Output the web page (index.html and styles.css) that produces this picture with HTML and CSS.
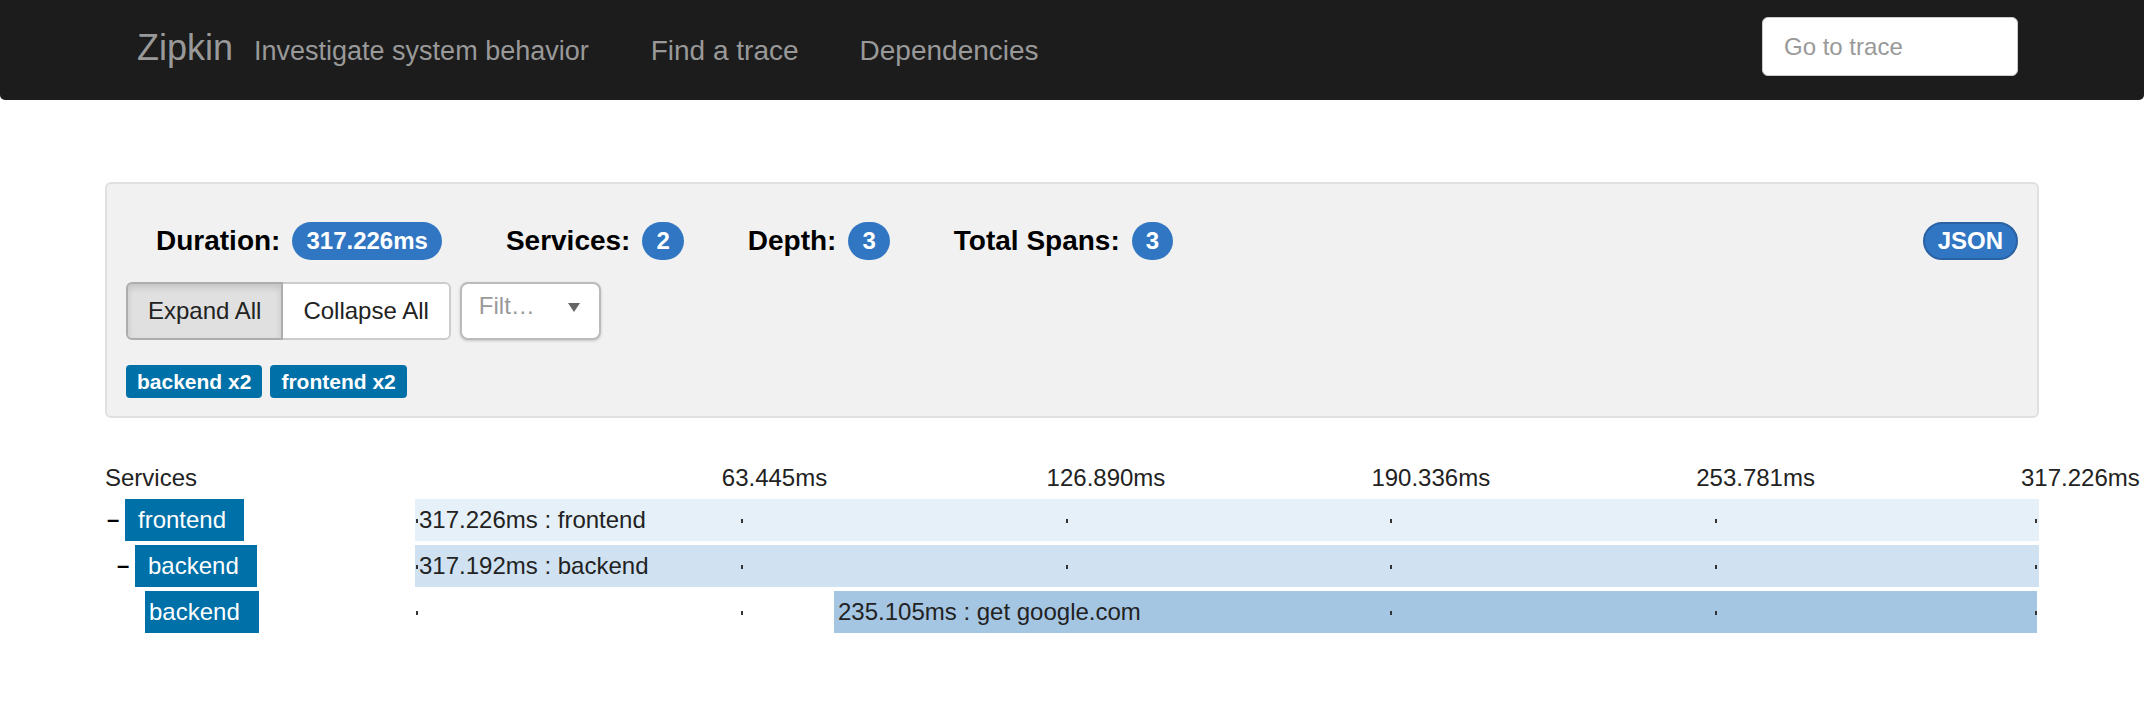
FILE: index.html
```html
<!DOCTYPE html>
<html lang="en">
<head>
<meta charset="utf-8">
<title>Zipkin - Trace</title>
<link rel="stylesheet" href="styles.css">
</head>
<body>
<nav class="navbar">
  <div class="nav-inner">
    <div class="nav-left">
      <span class="brand">Zipkin</span>
      <span class="tagline">Investigate system behavior</span>
      <ul class="nav-links">
        <li>Find a trace</li>
        <li>Dependencies</li>
      </ul>
    </div>
    <input class="goto" type="text" placeholder="Go to trace">
  </div>
</nav>

<main class="container">
  <section class="summary">
    <div class="summary-head">
      <div class="stats">
        <div class="stat"><span class="stat-label">Duration:</span><span class="badge">317.226ms</span></div>
        <div class="stat"><span class="stat-label">Services:</span><span class="badge">2</span></div>
        <div class="stat"><span class="stat-label">Depth:</span><span class="badge">3</span></div>
        <div class="stat"><span class="stat-label">Total Spans:</span><span class="badge">3</span></div>
      </div>
      <button class="json-btn" type="button">JSON</button>
    </div>
    <div class="controls">
      <div class="btn-group">
        <button class="btn btn-active" type="button">Expand All</button>
        <button class="btn" type="button">Collapse All</button>
      </div>
      <div class="filter">
        <span class="filter-text">Filt…</span>
        <span class="caret"></span>
      </div>
    </div>
    <div class="service-tags">
      <span class="tag">backend x2</span>
      <span class="tag">frontend x2</span>
    </div>
  </section>

  <section class="trace">
    <div class="trace-head">
      <div class="svc-col">Services</div>
      <div class="timeline">
        <span class="tick-label" style="left:20%">63.445ms</span>
        <span class="tick-label" style="left:40%">126.890ms</span>
        <span class="tick-label" style="left:60%">190.336ms</span>
        <span class="tick-label" style="left:80%">253.781ms</span>
        <span class="tick-label" style="left:100%">317.226ms</span>
      </div>
    </div>

    <div class="span-row first">
      <div class="svc-col depth-0">
        <span class="expander">–</span>
        <span class="svc-name parent">frontend</span>
      </div>
      <div class="timeline">
        <div class="bar bar-1" style="left:0%;width:100%"><span class="bar-text">317.226ms : frontend</span></div>
        <span class="tick" style="left:0%"></span>
        <span class="tick" style="left:20%"></span>
        <span class="tick" style="left:40%"></span>
        <span class="tick" style="left:60%"></span>
        <span class="tick" style="left:80%"></span>
        <span class="tick tick-end"></span>
      </div>
    </div>

    <div class="span-row">
      <div class="svc-col depth-1">
        <span class="expander">–</span>
        <span class="svc-name parent">backend</span>
      </div>
      <div class="timeline">
        <div class="bar bar-2" style="left:0%;width:99.99%"><span class="bar-text">317.192ms : backend</span></div>
        <span class="tick" style="left:0%"></span>
        <span class="tick" style="left:20%"></span>
        <span class="tick" style="left:40%"></span>
        <span class="tick" style="left:60%"></span>
        <span class="tick" style="left:80%"></span>
        <span class="tick tick-end"></span>
      </div>
    </div>

    <div class="span-row">
      <div class="svc-col depth-2">
        <span class="expander"></span>
        <span class="svc-name leaf">backend</span>
      </div>
      <div class="timeline">
        <div class="bar bar-3" style="left:25.8%;width:74.1%"><span class="bar-text">235.105ms : get google.com</span></div>
        <span class="tick" style="left:0%"></span>
        <span class="tick" style="left:20%"></span>
        <span class="tick" style="left:40%"></span>
        <span class="tick" style="left:60%"></span>
        <span class="tick" style="left:80%"></span>
        <span class="tick tick-end"></span>
      </div>
    </div>
  </section>
</main>
</body>
</html>
```

FILE: styles.css
```css
* { box-sizing: border-box; }

body {
  margin: 0;
  font-family: "Liberation Sans", Arial, Helvetica, sans-serif;
  color: #222;
  background: #fff;
}

/* ---------- navbar ---------- */
.navbar {
  height: 100px;
  background: #1c1c1c;
  border-radius: 0 0 5px 5px;
}

.nav-inner {
  width: 1934px;
  height: 100px;
  margin: 0 auto;
  padding: 0 21px 0 32px;
  display: flex;
  align-items: flex-start;
}

.nav-left {
  display: flex;
  align-items: baseline;
  margin-top: 28px;
  color: #999;
}

.brand {
  font-size: 36px;
  line-height: 40px;
}

.tagline {
  font-size: 27px;
  line-height: 40px;
  margin-left: 21px;
}

.nav-links {
  list-style: none;
  margin: 0 0 0 62px;
  padding: 0;
  display: flex;
  gap: 61px;
  font-size: 28px;
  line-height: 40px;
}

.goto {
  margin-left: auto;
  margin-top: 17px;
  width: 256px;
  height: 59px;
  border: 1px solid #ccc;
  border-radius: 6px;
  padding: 0 21px;
  font-family: "Liberation Sans", Arial, sans-serif;
  font-size: 24px;
  color: #555;
  background: #fff;
  outline: none;
}
.goto::placeholder { color: #999; }

/* ---------- summary panel ---------- */
.container {
  width: 1934px;
  margin: 82px auto 0;
}

.summary {
  background: #f1f1f1;
  border: 2px solid #e0e0e0;
  border-radius: 6px;
  padding: 19px 19px 18px;
}

.summary-head {
  display: flex;
  justify-content: space-between;
  align-items: center;
  height: 38px;
  margin-top: 19px;
}

.stats {
  display: flex;
  align-items: center;
  gap: 64px;
  padding-left: 30px;
}

.stat {
  display: flex;
  align-items: center;
  gap: 12px;
}

.stat-label {
  font-size: 28px;
  font-weight: bold;
  color: #000;
}

.badge {
  height: 38px;
  line-height: 38px;
  padding: 0 14px;
  border-radius: 19px;
  background: #3176c2;
  color: #fff;
  font-size: 24px;
  font-weight: bold;
}

.json-btn {
  height: 38px;
  padding: 0 13px;
  border: 2px solid #2a62a3;
  border-radius: 19px;
  background: #3176c2;
  color: #fff;
  font-family: "Liberation Sans", Arial, sans-serif;
  font-size: 24px;
  font-weight: bold;
  line-height: 34px;
}

.controls {
  display: flex;
  align-items: flex-start;
  gap: 9px;
  margin-top: 22px;
}

.btn-group { display: flex; }

.btn {
  height: 58px;
  padding: 0 20px;
  border: 2px solid #ccc;
  background: #fff;
  color: #222;
  font-family: "Liberation Sans", Arial, sans-serif;
  font-size: 24px;
}
.btn:first-child { border-radius: 6px 0 0 6px; }
.btn:last-child { border-radius: 0 6px 6px 0; margin-left: -2px; }

.btn-active {
  background: #e0e0e0;
  border-color: #adadad;
  box-shadow: inset 0 4px 6px rgba(0, 0, 0, 0.12);
  position: relative;
  z-index: 1;
}

.filter {
  width: 141px;
  height: 58px;
  border: 2px solid #bbb;
  border-radius: 8px;
  background: #fff;
  box-shadow: 0 1px 3px rgba(0, 0, 0, 0.18);
  display: flex;
  justify-content: space-between;
  align-items: flex-start;
  padding: 8px 19px 0 17px;
}

.filter-text {
  font-size: 24px;
  color: #999;
}

.caret {
  margin-top: 11px;
  width: 0;
  height: 0;
  border-left: 6px solid transparent;
  border-right: 6px solid transparent;
  border-top: 9px solid #666;
}

.service-tags {
  display: flex;
  gap: 8px;
  margin-top: 25px;
}

.tag {
  height: 33px;
  line-height: 33px;
  padding: 0 11px;
  border-radius: 4px;
  background: #0070a8;
  color: #fff;
  font-size: 21px;
  font-weight: bold;
}

/* ---------- trace timeline ---------- */
.trace {
  margin-top: 43px;
  font-size: 24px;
}

.trace-head {
  display: flex;
  height: 34px;
  line-height: 34px;
}

.svc-col {
  width: 310px;
  flex: none;
  display: flex;
}

.timeline {
  flex: 1;
  position: relative;
}

.tick-label {
  position: absolute;
  top: 0;
  margin-left: -18px;
  white-space: nowrap;
}

.span-row {
  display: flex;
  height: 42px;
  line-height: 42px;
  margin-top: 4px;
}

.depth-1 { padding-left: 10px; }
.depth-2 { padding-left: 20px; }

.expander {
  width: 20px;
  padding-left: 2px;
  font-size: 22px;
  font-weight: bold;
  color: #000;
}

.svc-name {
  background: #0070a8;
  color: #fff;
}
.svc-name.parent { padding: 0 18px 0 13px; }
.svc-name.leaf { padding: 0 19px 0 4px; }

.bar {
  position: absolute;
  top: 0;
  bottom: 0;
}
.bar-1 { background: #e6f0f8; }
.bar-2 { background: #d0e2f2; }
.bar-3 { background: #a5c6e3; }

.bar-text {
  padding-left: 4px;
  white-space: nowrap;
  color: #222;
}

.tick {
  position: absolute;
  top: 20px;
  width: 2px;
  height: 4px;
  margin-left: 1px;
  background: #333;
}
.tick-end {
  left: auto;
  right: 2px;
}
```
